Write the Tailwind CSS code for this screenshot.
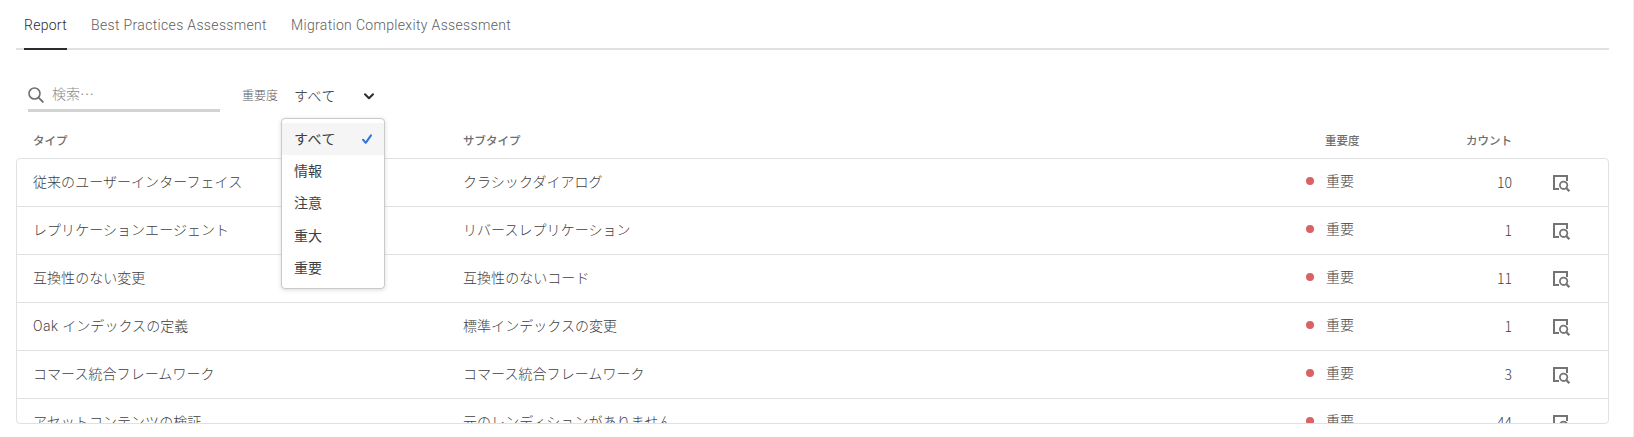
<!DOCTYPE html>
<html lang="ja">
<head>
<meta charset="utf-8">
<title>Report</title>
<script src="https://cdn.jsdelivr.net/npm/@tailwindcss/browser@4"></script>
</head>
<body class="h-[437px] overflow-hidden border-r border-[#f0f0f0] bg-white pl-4 pr-6 font-['Noto_Sans_CJK_JP',sans-serif] text-sm font-light text-[#404040]">
<svg class="hidden">
  <symbol id="inspect" viewBox="0 0 18 18">
    <path d="M7 15H2V2H15V7" fill="none" stroke="#747474" stroke-width="2"/>
    <circle cx="11.6" cy="11.3" r="3.7" fill="none" stroke="#747474" stroke-width="1.8"/>
    <path d="M14 13.8 17.3 17.1" stroke="#747474" stroke-width="2.2"/>
  </symbol>
</svg>
<nav class="flex h-[50px] gap-6 border-b-2 border-[#e1e1e1] pl-2 font-[Roboto,sans-serif] font-light text-[#5e5e5e]">
  <a class="-mb-0.5 h-[50px] w-[43px] whitespace-nowrap border-b-2 border-[#2c2c2c] leading-[50px] tracking-[0.28px] text-[#2c2c2c]">Report</a>
  <a class="w-44 whitespace-nowrap leading-[50px] tracking-[0.34px]">Best Practices Assessment</a>
  <a class="whitespace-nowrap leading-[50px] tracking-[0.33px]">Migration Complexity Assessment</a>
</nav>
<div class="flex h-[76px] pl-3 pt-7">
  <div class="flex h-[34px] w-48 items-center border-b-[3px] border-[#d3d3d3]">
    <svg class="mt-0.5 h-4 w-4" viewBox="0 0 16 16" fill="none" stroke="#6e6e6e"><circle cx="6.5" cy="6.5" r="5.5" stroke-width="1.6"/><path d="m10.6 10.6 4.8 4.8" stroke-width="1.9"/></svg>
    <span class="-mt-0.5 ml-2 text-[#8c8c8c]">検索…</span>
  </div>
  <span class="ml-[22px] w-[52px] text-xs leading-[33px] text-[#5e5e5e]">重要度</span>
  <div class="relative flex h-[34px] w-[89px] justify-between">
    <span class="leading-[34px] tracking-[0.5px] text-[#2c2c2c]">すべて</span>
    <svg class="mt-3 mr-2 h-3 w-3" viewBox="0 0 12 12" fill="none" stroke="#2c2c2c" stroke-width="2" stroke-linecap="round" stroke-linejoin="round"><path d="m2 4.2 4 4 4-4"/></svg>
    <ul class="absolute -left-[13px] top-10 h-[171px] w-[104px] rounded border border-[#cacaca] bg-white py-1 font-normal shadow-[0_1px_4px_rgba(0,0,0,0.15)]">
      <li class="flex h-8 items-center justify-between bg-[#f5f5f5] pl-3 pr-3"><span class="-mt-0.5 tracking-[0.5px]">すべて</span>
        <svg class="h-2.5 w-2.5" viewBox="0 0 10 10" fill="none" stroke="#2c73dc" stroke-width="2" stroke-linecap="round" stroke-linejoin="round"><path d="m1 5.7 2.7 3.1L9 1.3"/></svg></li>
      <li class="h-8 pl-3 leading-[30px]">情報</li>
      <li class="h-8 pl-3 leading-[30px]">注意</li>
      <li class="h-8 pl-3 leading-8">重大</li>
      <li class="h-8 pl-3 leading-8">重要</li>
    </ul>
  </div>
</div>
<div class="flex h-8 pl-[17px] text-[11.5px] font-medium leading-[29px] text-[#6e6e6e]">
  <span class="w-[430px]">タイプ</span>
  <span class="w-[862px]">サブタイプ</span>
  <span class="w-[60px]">重要度</span>
  <span class="w-[127px] text-right">カウント</span>
</div>
<div id="rows" class="h-[266px] overflow-hidden rounded border border-[#e1e1e1]"></div>
<script>
const rows = [
  ['従来のユーザーインターフェイス', 'クラシックダイアログ', 10],
  ['レプリケーションエージェント', 'リバースレプリケーション', 1],
  ['互換性のない変更', '互換性のないコード', 11],
  ['<span class="font-[Roboto,sans-serif] tracking-[0.5px]">Oak </span>インデックスの定義', '標準インデックスの変更', 1],
  ['コマース統合フレームワーク', 'コマース統合フレームワーク', 3],
  ['アセットコンテンツの検証', '元のレンディションがありません', 44]
];
document.getElementById('rows').innerHTML = rows.map(([type, sub, count]) => `
  <div class="flex h-12 border-b border-[#e1e1e1] pl-4 leading-[45px]">
    <span class="w-[430px] tracking-[0.05px]">${type}</span>
    <span class="w-[843px] tracking-[0.05px]">${sub}</span>
    <span class="mt-[18px] h-2 w-2 rounded-full bg-[#da6264]"></span>
    <span class="ml-3 w-20 leading-[43px]">重要</span>
    <span class="w-[106px] text-right leading-[46px]">${count}</span>
    <svg class="ml-10 mt-[15px] h-[18px] w-[18px]"><use href="#inspect"/></svg>
  </div>`).join('');
</script>
</body>
</html>
